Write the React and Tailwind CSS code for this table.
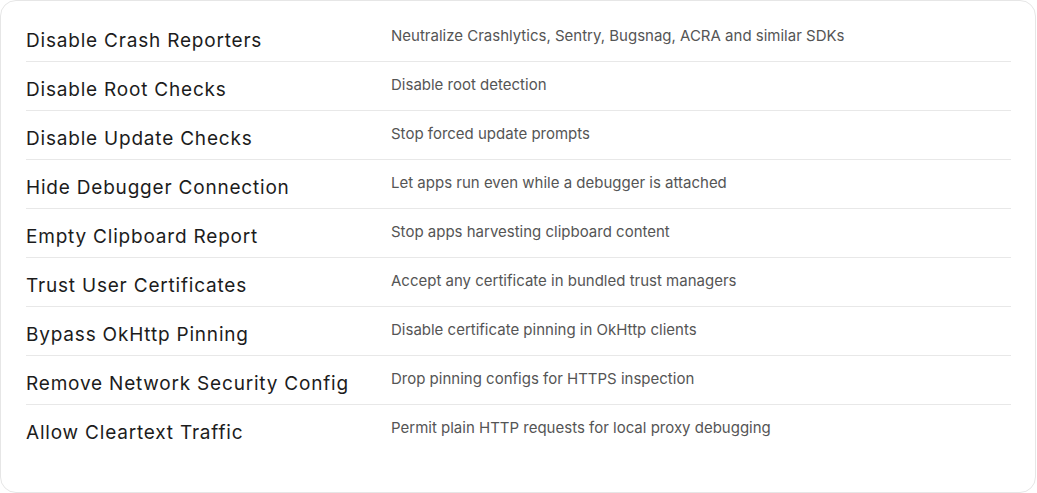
const rows = [
  ["Disable Crash Reporters", "Neutralize Crashlytics, Sentry, Bugsnag, ACRA and similar SDKs"],
  ["Disable Root Checks", "Disable root detection"],
  ["Disable Update Checks", "Stop forced update prompts"],
  ["Hide Debugger Connection", "Let apps run even while a debugger is attached"],
  ["Empty Clipboard Report", "Stop apps harvesting clipboard content"],
  ["Trust User Certificates", "Accept any certificate in bundled trust managers"],
  ["Bypass OkHttp Pinning", "Disable certificate pinning in OkHttp clients"],
  ["Remove Network Security Config", "Drop pinning configs for HTTPS inspection"],
  ["Allow Cleartext Traffic", "Permit plain HTTP requests for local proxy debugging"],
];

export default function App() {
  return (
    <div className="w-[1037px] h-[493px] bg-white" style={{ fontFamily: "Inter, 'Liberation Sans', sans-serif" }}>
      <div className="w-[1036px] h-[493px] rounded-[16px] border border-[#e6e6e6] bg-white pl-[25px] pr-[24px] pt-[12px]">
        {rows.map(([t, d], i) => (
          <div
            key={t}
            className={
              "grid grid-cols-[365px_1fr] items-start pt-[14px] pb-[6px] " +
              (i < rows.length - 1 ? "border-b border-[#e8e8e8]" : "")
            }
          >
            <div className="text-[19px] leading-[28px] tracking-[0.8px] text-[#1c1c1c] whitespace-nowrap">{t}</div>
            <div className="-mt-[1px] text-[15px] leading-[20px] text-[#555555] whitespace-nowrap">{d}</div>
          </div>
        ))}
      </div>
    </div>
  );
}
